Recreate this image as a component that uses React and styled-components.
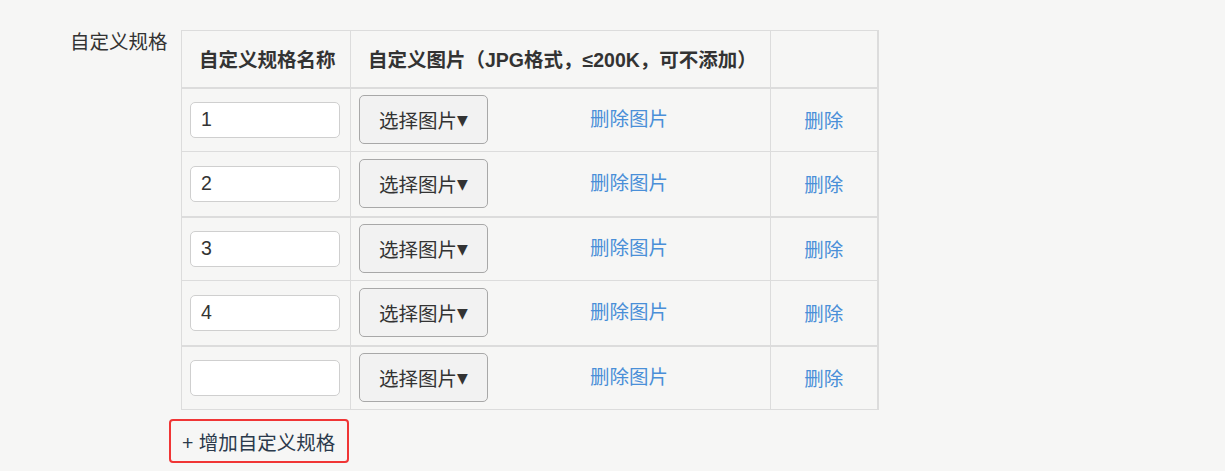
import React from "react";
import styled, { createGlobalStyle } from "styled-components";

const Global = createGlobalStyle`
  html, body { margin: 0; padding: 0; background: #f6f6f5; }
  body { font-family: "Liberation Sans", "Noto Sans CJK SC", sans-serif; color: #333; }
  * { box-sizing: border-box; }
`;

const Page = styled.div`
  padding: 30px 0 0 70px;
  min-height: 471px;
`;

const FormRow = styled.div`
  display: flex;
  align-items: flex-start;
`;

const Label = styled.div`
  width: 99px;
  font-size: 19.5px;
  line-height: 24px;
  color: #333;
`;

const Content = styled.div`
  display: flex;
  flex-direction: column;
  align-items: flex-start;
`;

const Table = styled.table`
  margin-left: 12px;
  border-collapse: collapse;
  border: 1px solid #dcdcdc;
  border-right-width: 2px;
  table-layout: fixed;
  width: 696px;
`;

const Th = styled.th`
  height: 57px;
  padding: 0 0 0 17px;
  text-align: left;
  font-size: 19.5px;
  font-weight: 700;
  color: #333;
  border: 1px solid #dcdcdc;
  border-bottom-width: 2px;
  white-space: nowrap;
`;

const Td = styled.td`
  height: ${(p) => (p.$thick ? "65px" : "64px")};
  padding: 0 8px;
  border: 1px solid #dcdcdc;
  border-bottom-width: ${(p) => (p.$thick ? "2px" : "1px")};
  text-align: ${(p) => (p.$center ? "center" : "left")};
  vertical-align: middle;
`;

const TextInput = styled.input`
  width: 150px;
  height: 36px;
  border: 1px solid #cfcfcf;
  border-radius: 5px;
  background: #fff;
  padding: 0 10px;
  font-family: "Liberation Sans", "Noto Sans CJK SC", sans-serif;
  font-size: 19.5px;
  color: #333;
  outline: none;
`;

const ImageCell = styled.div`
  display: flex;
  align-items: center;
`;

const PickButton = styled.button`
  width: 129px;
  height: 49px;
  border: 1px solid #a8a8a8;
  border-radius: 5px;
  background: #f2f2f2;
  font-family: "Liberation Sans", "Noto Sans CJK SC", sans-serif;
  font-size: 19.5px;
  color: #333;
  display: flex;
  align-items: center;
  justify-content: center;
  padding: 0;
`;

const Caret = styled.span`
  font-size: 14px;
  font-family: "DejaVu Sans", sans-serif;
  margin-left: 0;
  color: #333;
`;

const Link = styled.a`
  font-size: 19.5px;
  color: #4a8fd8;
  text-decoration: none;
  cursor: pointer;
  ${(p) => (p.$grow ? "flex: 1; text-align: center; margin-top: -4px; padding-left: 8px;" : "")}
`;

const AddButton = styled.button`
  margin-top: 9px;
  width: 180px;
  height: 44px;
  border: 2px solid #f03535;
  border-radius: 4px;
  background: transparent;
  padding: 0 0 0 11px;
  text-align: left;
  font-family: "Liberation Sans", "Noto Sans CJK SC", sans-serif;
  font-size: 19.5px;
  color: #2b3a4c;
`;

const rows = ["1", "2", "3", "4", ""];

export default function App() {
  return (
    <Page>
      <Global />
      <FormRow>
        <Label>自定义规格</Label>
        <Content>
          <Table>
            <colgroup>
              <col style={{ width: 169 }} />
              <col style={{ width: 420 }} />
              <col style={{ width: 107 }} />
            </colgroup>
            <thead>
              <tr>
                <Th>自定义规格名称</Th>
                <Th>自定义图片（JPG格式，≤200K，可不添加）</Th>
                <Th />
              </tr>
            </thead>
            <tbody>
              {rows.map((v, i) => (
                <tr key={i}>
                  <Td $thick={i % 2 === 1}>
                    <TextInput defaultValue={v} />
                  </Td>
                  <Td $thick={i % 2 === 1}>
                    <ImageCell>
                      <PickButton>
                        选择图片<Caret>▼</Caret>
                      </PickButton>
                      <Link $grow>删除图片</Link>
                    </ImageCell>
                  </Td>
                  <Td $center $thick={i % 2 === 1}>
                    <Link>删除</Link>
                  </Td>
                </tr>
              ))}
            </tbody>
          </Table>
          <AddButton>+ 增加自定义规格</AddButton>
        </Content>
      </FormRow>
    </Page>
  );
}
